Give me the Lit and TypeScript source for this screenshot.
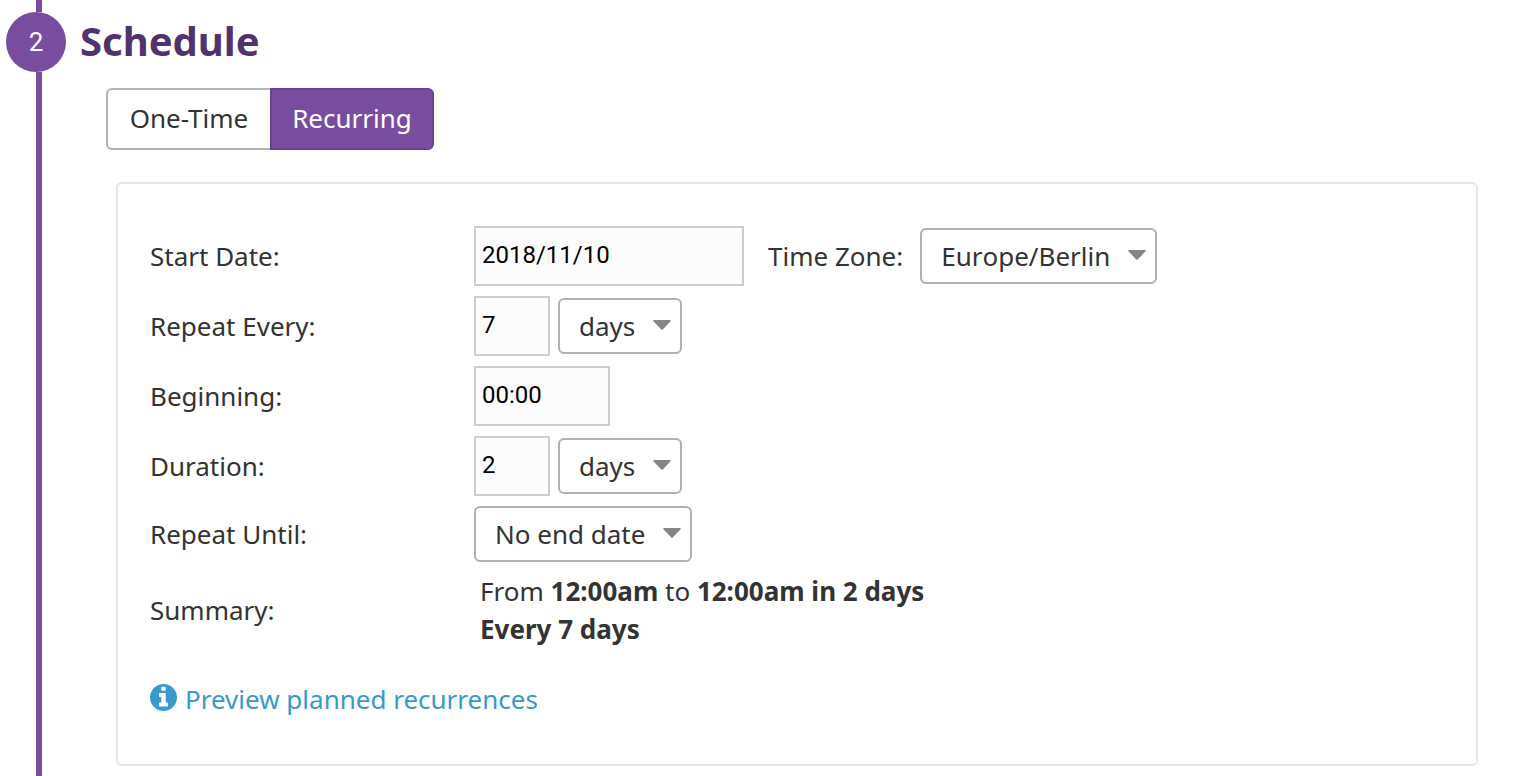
import { LitElement, html, css, svg } from "lit";
import { customElement, property, state } from "lit/decorators.js";

const infoIcon = svg`<path fill="currentColor" d="M1024 1376v-160q0-14-9-23t-23-9h-96v-512q0-14-9-23t-23-9h-320q-14 0-23 9t-9 23v160q0 14 9 23t23 9h96v320h-96q-14 0-23 9t-9 23v160q0 14 9 23t23 9h448q14 0 23-9t9-23zm-128-896v-160q0-14-9-23t-23-9h-192q-14 0-23 9t-9 23v160q0 14 9 23t23 9h192q14 0 23-9t9-23zm640 416q0 209-103 385.5t-279.5 279.5-385.5 103-385.5-103-279.5-279.5-103-385.5 103-385.5 279.5-279.5 385.5-103 385.5 103 279.5 279.5 103 385.5z"/>`;

@customElement("schedule-form")
class ScheduleForm extends LitElement {
  static styles = css`
    :host {
      display: block;
    }
    .card {
      border: 2px solid #e6e6e6;
      border-radius: 6px;
      padding: 42px 32px 46px;
      background: #fff;
    }
    .fields {
      display: grid;
      grid-template-columns: 324px 1fr;
      row-gap: 10px;
      align-items: center;
    }
    .controls {
      display: flex;
      flex-wrap: wrap;
      align-items: center;
      gap: 8px;
    }
    .zone {
      display: flex;
      align-items: center;
      gap: 17px;
      margin-left: 16px;
    }
    input,
    select {
      box-sizing: border-box;
      margin: 0;
      font-family: inherit;
    }
    input {
      height: 60px;
      padding: 0 6px 2px;
      border: 2px solid #ccc;
      border-radius: 0;
      background: #fcfcfc;
      color: #000;
      font-family: Roboto, "Noto Sans", sans-serif;
      font-size: 24px;
    }
    .date {
      width: 270px;
    }
    .count {
      width: 76px;
    }
    .time {
      width: 136px;
    }
    select {
      appearance: none;
      height: 56px;
      padding: 0 44px 0 19px;
      border: 2px solid #b0b0b5;
      border-radius: 6px;
      color: #333;
      font-size: 26px;
      font-kerning: none;
      background: #fff
        url("data:image/svg+xml,%3Csvg xmlns='http://www.w3.org/2000/svg' viewBox='0 0 18 10'%3E%3Cpath d='M1 0h16q1.400 0 .5 1.200L10 9.300q-1 1-2 0L.5 1.200Q-.4 0 1 0z' fill='%23858585'/%3E%3C/svg%3E")
        no-repeat right 9px top 20px / 18px 10px;
    }
    .summary {
      margin: 0;
      padding-left: 6px;
    }
    .preview {
      display: flex;
      width: fit-content;
      align-items: center;
      gap: 8px;
      margin-top: 32px;
      color: #3899cc;
      text-decoration: none;
    }
    .info {
      width: 27px;
      height: 27px;
      margin-bottom: 4px;
    }
  `;

  render() {
    return html`
      <form class="card">
        <div class="fields">
          <label for="start">Start Date:</label>
          <div class="controls">
            <input id="start" class="date" type="text" value="2018/11/10" />
            <div class="zone">
              <label for="zone">Time Zone:</label>
              <select id="zone"><option>Europe/Berlin</option></select>
            </div>
          </div>

          <label for="every">Repeat Every:</label>
          <div class="controls">
            <input id="every" class="count" type="text" inputmode="numeric" value="7" />
            <select aria-label="Repeat unit"><option>days</option></select>
          </div>

          <label for="beginning">Beginning:</label>
          <div class="controls">
            <input id="beginning" class="time" type="text" value="00:00" />
          </div>

          <label for="duration">Duration:</label>
          <div class="controls">
            <input id="duration" class="count" type="text" inputmode="numeric" value="2" />
            <select aria-label="Duration unit"><option>days</option></select>
          </div>

          <label for="until">Repeat Until:</label>
          <div class="controls">
            <select id="until"><option>No end date</option></select>
          </div>

          <span>Summary:</span>
          <p class="summary">
            From <b>12:00am</b> to <b>12:00am in 2 days</b><br /><b>Every 7 days</b>
          </p>
        </div>
        <a class="preview" href="#recurrences">
          <svg class="info" viewBox="0 128 1536 1536" aria-hidden="true">${infoIcon}</svg>
          <span>Preview planned recurrences</span>
        </a>
      </form>
    `;
  }
}

@customElement("schedule-mode")
class ScheduleMode extends LitElement {
  static styles = css`
    :host {
      display: grid;
      grid-template-columns: 164px 164px;
    }
    button {
      box-sizing: border-box;
      height: 62px;
      margin: 0;
      padding: 0 0 2px;
      border: 2px solid #b3b3b3;
      background: #fff;
      color: #333;
      font-family: inherit;
      font-size: 26px;
    }
    button:first-child {
      border-right-width: 0;
      border-radius: 6px 0 0 6px;
    }
    button:last-child {
      border-radius: 0 6px 6px 0;
    }
    button[aria-pressed="true"] {
      border-color: #694192;
      background: #784da0;
      color: #fff;
    }
  `;

  @state() mode = "Recurring";

  render() {
    return ["One-Time", "Recurring"].map(
      (name) => html`<button
        type="button"
        aria-pressed=${this.mode === name ? "true" : "false"}
        @click=${() => (this.mode = name)}
      >${name}</button>`
    );
  }
}

@customElement("wizard-step")
class WizardStep extends LitElement {
  static styles = css`
    :host {
      display: grid;
      grid-template-columns: 66px 1fr;
      column-gap: 14px;
      min-height: 100vh;
    }
    .rail {
      display: flex;
      flex-direction: column;
      align-items: center;
      padding-left: 6px;
    }
    .line {
      width: 6px;
      height: 12px;
      margin-left: 6px;
      background: #784da0;
    }
    .grow {
      flex: 1;
    }
    .number {
      display: grid;
      place-items: center;
      width: 60px;
      height: 60px;
      border-radius: 50%;
      background: #784da0;
      color: #fff;
      font-family: Roboto, "Noto Sans", sans-serif;
      font-size: 26px;
    }
    .body {
      padding: 12px 40px 10px 0;
    }
    h2 {
      margin: 0 0 18px;
      color: #51326e;
      font-size: 40px;
      line-height: 58px;
      font-weight: 700;
    }
  `;

  @property() number = "";
  @property() heading = "";

  render() {
    return html`
      <div class="rail">
        <div class="line"></div>
        <div class="number">${this.number}</div>
        <div class="line grow"></div>
      </div>
      <section class="body">
        <h2>${this.heading}</h2>
        <slot></slot>
      </section>
    `;
  }
}

@customElement("app-root")
class AppRoot extends LitElement {
  static styles = css`
    :host {
      display: block;
      background: #fff;
      color: #333;
      font-family: "Noto Sans", "Open Sans", sans-serif;
      font-size: 26px;
      line-height: 38px;
    }
    .mode {
      margin-left: 26px;
    }
    .form {
      margin: 32px 0 0 36px;
    }
  `;

  render() {
    return html`
      <wizard-step number="2" heading="Schedule">
        <schedule-mode class="mode"></schedule-mode>
        <schedule-form class="form"></schedule-form>
      </wizard-step>
    `;
  }
}
